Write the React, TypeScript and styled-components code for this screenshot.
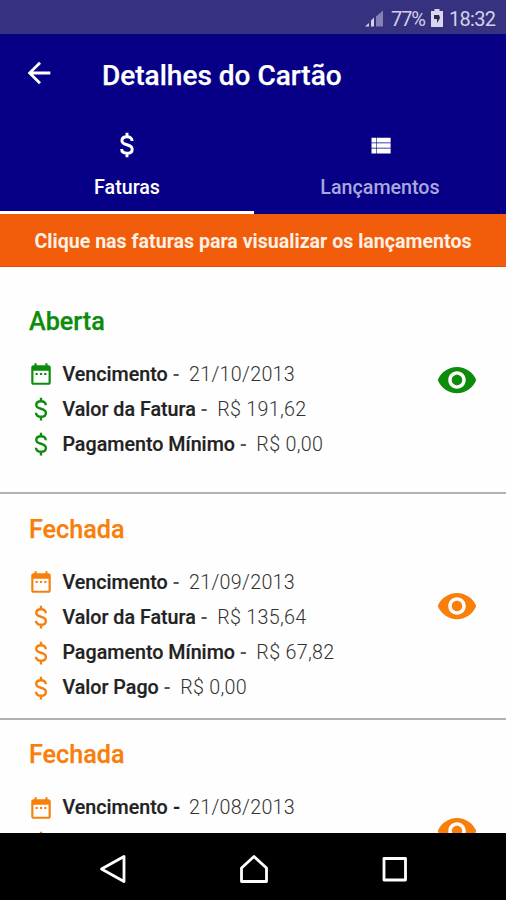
import React from 'react';
import styled, { createGlobalStyle } from 'styled-components';

const GlobalStyle = createGlobalStyle`
  * { box-sizing: border-box; }
  body { margin: 0; font-family: Roboto, "Liberation Sans", sans-serif; }
`;

const Screen = styled.div`
  width: 506px;
  height: 900px;
  display: flex;
  flex-direction: column;
  overflow: hidden;
  background: #fefefe;
`;

const StatusBar = styled.div`
  height: 34px;
  flex: none;
  display: flex;
  align-items: center;
  justify-content: flex-end;
  padding: 3px 11px 0 0;
  background: #36327f;
  color: #d3d1ea;
  font-size: 20px;
  line-height: 24px;
`;

const StatusText = styled.span<{ $width: number; $spacing: number }>`
  width: ${p => p.$width}px;
  white-space: nowrap;
  letter-spacing: ${p => p.$spacing}px;
`;

const SignalIcon = styled.svg`
  width: 24px;
  height: 20px;
  margin-right: 6px;
`;

const BatteryIcon = styled.svg`
  width: 12px;
  height: 18px;
  margin: 0 6px 2px 0;
`;

const Header = styled.header`
  height: 180px;
  flex: none;
  display: flex;
  flex-direction: column;
  background: #070087;
  color: #fff;
`;

const TitleBar = styled.div`
  height: 80px;
  display: flex;
  align-items: center;
  padding: 0 0 2px 22px;
`;

const Title = styled.h1`
  margin: 5px 0 0 46px;
  font-size: 28px;
  line-height: 32px;
  font-weight: 500;
  white-space: nowrap;
  -webkit-text-stroke: 0.25px currentColor;
`;

const Tabs = styled.div`
  flex: 1;
  display: grid;
  grid-template-columns: 254px 252px;
`;

const Tab = styled.div<{ $active?: boolean }>`
  display: flex;
  flex-direction: column;
  align-items: center;
  padding-top: 15px;
  border-bottom: 3px solid ${p => (p.$active ? '#fff' : 'transparent')};
`;

const TabIconSlot = styled.span`
  height: 32px;
  display: flex;
  align-items: center;
`;

const TabLabel = styled.span<{ $active?: boolean }>`
  margin-top: 15px;
  font-size: 19.7px;
  line-height: 24px;
  font-weight: 500;
  color: ${p => (p.$active ? '#fff' : '#aaa7dc')};
`;

const Banner = styled.div`
  height: 53px;
  flex: none;
  display: flex;
  align-items: center;
  justify-content: center;
  padding-top: 2px;
  border-bottom: 1px solid #e84a0c;
  background: #f15d0a;
  color: #fff0e4;
  font-size: 19.6px;
  font-weight: 700;
  white-space: nowrap;
`;

const List = styled.main`
  flex: 1;
  min-height: 0;
  overflow: hidden;
`;

const Invoice = styled.section<{ $tone: string }>`
  height: 225.6px;
  display: flex;
  align-items: center;
  justify-content: space-between;
  padding: 0 28.5px 0 29px;
  border-bottom: 2px solid #b2b2b2;
  color: ${p => p.$tone};
  &:first-child { height: 227px; }
`;

const Details = styled.div<{ $height: number; $top: number }>`
  height: ${p => p.$height}px;
  padding-top: ${p => p.$top}px;
`;

const InvoiceTitle = styled.h2`
  margin: 0 0 20px;
  font-size: 25.2px;
  line-height: 30px;
  font-weight: 500;
  -webkit-text-stroke: 0.25px currentColor;
`;

const Row = styled.div`
  height: 35.2px;
  display: flex;
  align-items: center;
  font-size: 19.7px;
  white-space: nowrap;
`;

const IconSlot = styled.span`
  width: 25px;
  margin: 0 9px 0 -0.6px;
  display: flex;
  justify-content: center;
`;

const Label = styled.span`
  color: #222;
  font-weight: 500;
  -webkit-text-stroke: 0.2px currentColor;
`;

const Dash = styled.span<{ $strong?: boolean }>`
  width: 21.4px;
  padding-left: 5px;
  color: ${p => (p.$strong ? '#222' : '#555')};
  font-weight: ${p => (p.$strong ? 700 : 500)};
`;

const Value = styled.span`
  color: #333;
  font-weight: 300;
  letter-spacing: 0.3px;
`;

const Glyph = styled.svg<{ $size: number }>`
  width: ${p => p.$size}px;
  height: ${p => p.$size}px;
  flex: none;
  fill: currentColor;
`;

const MoneyGlyph = styled(Glyph)<{ $weight: number }>`
  fill: none;
  stroke: currentColor;
  stroke-width: ${p => p.$weight};
`;

const NavBar = styled.nav`
  height: 67px;
  flex: none;
  display: grid;
  grid-template-columns: repeat(3, 141px);
  justify-content: center;
  justify-items: center;
  padding: 20px 0 0 1px;
  background: #000;
`;

const NavIcon = styled.svg`
  width: 32px;
  height: 32px;
  fill: none;
  stroke: #fff;
  stroke-width: 2.8;
  stroke-linejoin: round;
`;

const CALENDAR =
  'M9 11H7v2h2v-2zm4 0h-2v2h2v-2zm4 0h-2v2h2v-2zm2-7h-1V2h-2v2H8V2H6v2H5c-1.11 0-1.99.9-1.99 2L3 20c0 1.1.89 2 2 2h14c1.1 0 2-.9 2-2V6c0-1.1-.9-2-2-2zm0 16H5V9h14v11z';
const EYE =
  'M12 4.5C7 4.5 2.73 7.61 1 12c1.73 4.39 6 7.5 11 7.5s9.27-3.11 11-7.5c-1.73-4.39-6-7.5-11-7.5zM12 17c-2.76 0-5-2.24-5-5s2.24-5 5-5 5 2.24 5 5-2.24 5-5 5zm0-8c-1.66 0-3 1.34-3 3s1.34 3 3 3 3-1.34 3-3-1.34-3-3-3z';
const BACK = 'M20 11H7.83l5.59-5.59L12 4l-8 8 8 8 1.41-1.41L7.83 13H20v-2z';
const LIST =
  'M4 13.900h4.300v-3.800H4zM4 19h4.300v-4.400H4zM4 9.400h4.300V5H4zM8.800 13.900H21v-3.800H8.800zM8.800 19H21v-4.400H8.800zM8.800 5v4.400H21V5z';

const Icon = ({ path, size }: { path: string; size: number }) => (
  <Glyph $size={size} viewBox="0 0 24 24">
    <path d={path} />
  </Glyph>
);

const Money = ({ size, weight }: { size: number; weight: number }) => (
  <MoneyGlyph $size={size} $weight={weight} viewBox="0 0 24 24">
    <path d="M15.800 9C15.800 6.900 14.300 5.800 12 5.800S8.200 7 8.200 8.800C8.200 12.800 15.900 10.800 15.900 15.100C15.900 17.100 14.300 18.200 12 18.200S8 17.100 8 15M12 2.900v3M12 18v3.100" />
  </MoneyGlyph>
);

const GREEN = '#0b8c0b';
const ORANGE = '#f77f0a';

type InvoiceData = {
  status: string;
  tone: string;
  height: number;
  top: number;
  strongDash?: boolean;
  rows: { label?: string; value?: string }[];
};

const invoices: InvoiceData[] = [
  {
    status: 'Aberta',
    tone: GREEN,
    height: 162,
    top: 8,
    rows: [
      { label: 'Vencimento', value: '21/10/2013' },
      { label: 'Valor da Fatura', value: 'R$ 191,62' },
      { label: 'Pagamento Mínimo', value: 'R$ 0,00' },
    ],
  },
  {
    status: 'Fechada',
    tone: ORANGE,
    height: 197,
    top: 7.3,
    rows: [
      { label: 'Vencimento', value: '21/09/2013' },
      { label: 'Valor da Fatura', value: 'R$ 135,64' },
      { label: 'Pagamento Mínimo', value: 'R$ 67,82' },
      { label: 'Valor Pago', value: 'R$ 0,00' },
    ],
  },
  {
    status: 'Fechada',
    tone: ORANGE,
    height: 197,
    top: 7.5,
    strongDash: true,
    rows: [{ label: 'Vencimento', value: '21/08/2013' }, {}],
  },
];

export default function App() {
  return (
    <>
      <GlobalStyle />
      <Screen>
        <StatusBar>
          <SignalIcon viewBox="0 0 24 20">
            <path d="M4 17.500l4-3.500v3.500zM10 17.500v-6l3-3v9z" fill="#d3d1ea" />
            <path d="M15 17.500v-10l7-6v16z" fill="#8580b5" />
          </SignalIcon>
          <StatusText $width={40} $spacing={-1.1}>77%</StatusText>
          <BatteryIcon viewBox="0 0 12 18">
            <path d="M3.500 0h5v2H12v16H0V2h3.500z" fill="#d9d7ef" />
            <path d="M3 6h5l1 3-3 5v-4H3z" fill="#29264f" />
          </BatteryIcon>
          <StatusText $width={46} $spacing={-0.7}>18:32</StatusText>
        </StatusBar>
        <Header>
          <TitleBar>
            <Icon path={BACK} size={34} />
            <Title>Detalhes do Cartão</Title>
          </TitleBar>
          <Tabs>
            <Tab $active>
              <TabIconSlot>
                <Money size={32} weight={2.2} />
              </TabIconSlot>
              <TabLabel $active>Faturas</TabLabel>
            </Tab>
            <Tab>
              <TabIconSlot>
                <Icon path={LIST} size={27} />
              </TabIconSlot>
              <TabLabel>Lançamentos</TabLabel>
            </Tab>
          </Tabs>
        </Header>
        <Banner>Clique nas faturas para visualizar os lançamentos</Banner>
        <List>
          {invoices.map((invoice, i) => (
            <Invoice key={i} $tone={invoice.tone}>
              <Details $height={invoice.height} $top={invoice.top}>
                <InvoiceTitle>{invoice.status}</InvoiceTitle>
                {invoice.rows.map(({ label, value }, r) => (
                  <Row key={r}>
                    <IconSlot>
                      {r === 0 ? <Icon path={CALENDAR} size={26} /> : <Money size={30} weight={1.9} />}
                    </IconSlot>
                    {label && (
                      <>
                        <Label>{label}</Label>
                        <Dash $strong={invoice.strongDash}>-</Dash>
                        <Value>{value}</Value>
                      </>
                    )}
                  </Row>
                ))}
              </Details>
              <Icon path={EYE} size={42} />
            </Invoice>
          ))}
        </List>
        <NavBar>
          <NavIcon viewBox="0 0 32 32">
            <path d="M27 3.500v25L4.500 16z" />
          </NavIcon>
          <NavIcon viewBox="0 0 32 32">
            <path d="M16 3.500L28.500 15v13.500h-25V15z" />
          </NavIcon>
          <NavIcon viewBox="0 0 32 32">
            <rect x="5" y="5.500" width="21.500" height="21.500" />
          </NavIcon>
        </NavBar>
      </Screen>
    </>
  );
}
